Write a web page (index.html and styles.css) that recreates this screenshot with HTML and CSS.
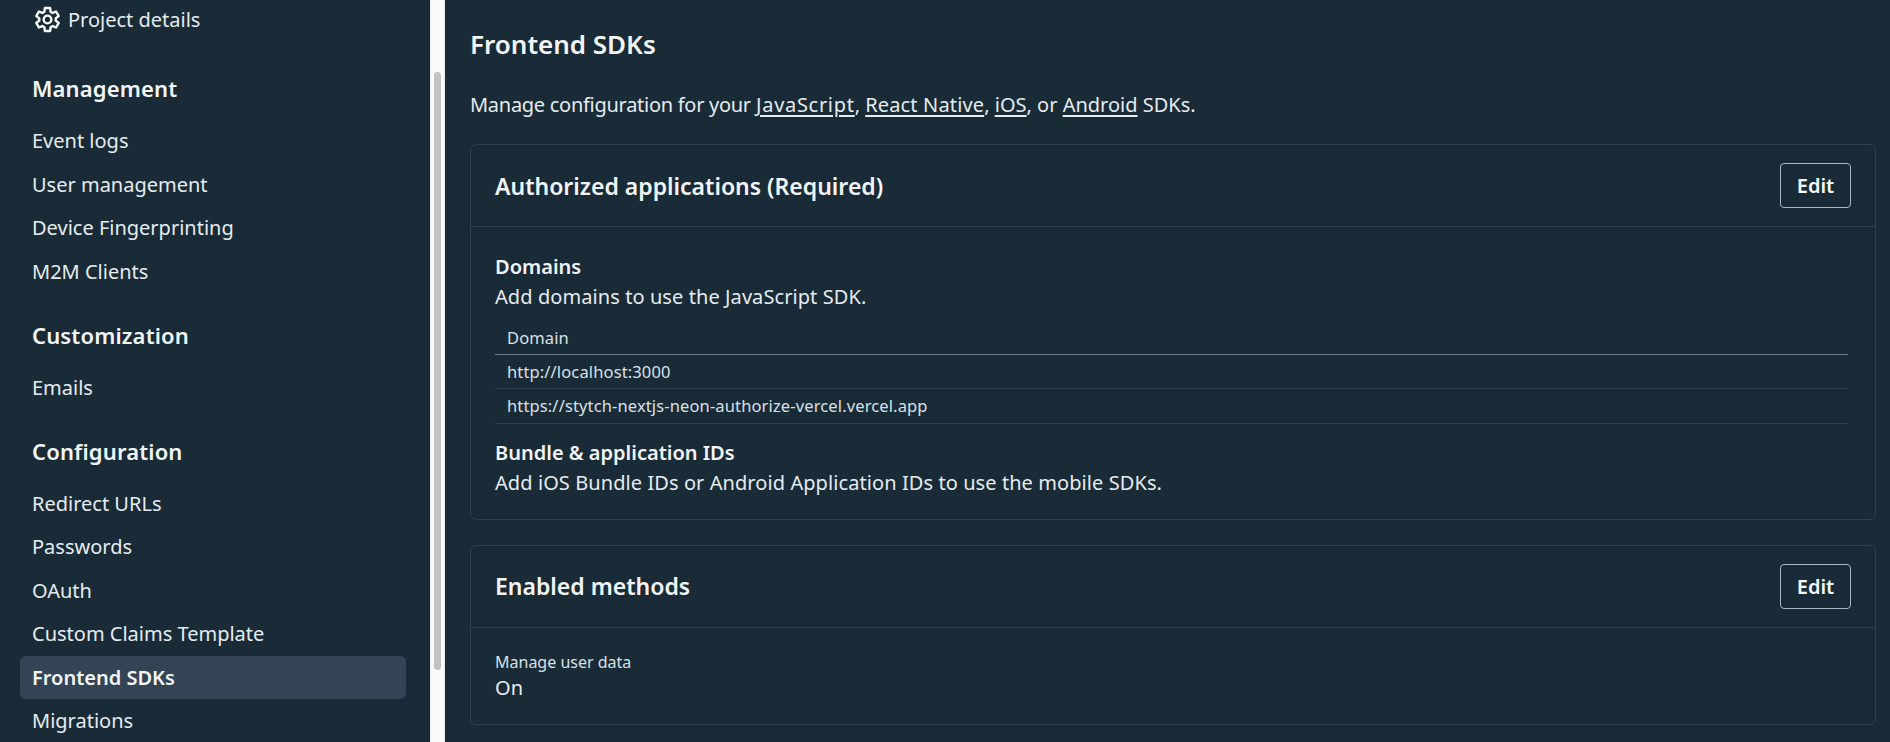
FILE: index.html
```html
<!DOCTYPE html>
<html lang="en">
<head>
<meta charset="utf-8">
<title>Frontend SDKs</title>
<link rel="stylesheet" href="styles.css">
</head>
<body>
<div class="app">
  <nav class="sidebar">
    <a class="item project">
      <svg class="gear" viewBox="-1 -1 26 26" width="27" height="27" fill="none" stroke="currentColor" stroke-width="2.3" stroke-linejoin="round"><path d="M9 4.58 9.46.99h5.08L15 4.58l1.93 1.12 3.33-1.41 2.54 4.41-2.88 2.19v2.22l2.88 2.19-2.54 4.41-3.33-1.41L15 19.42l-.46 3.59H9.46L9 19.42 7.07 18.3l-3.33 1.41-2.54-4.41 2.88-2.19v-2.22L1.2 8.7l2.54-4.41 3.33 1.41z"/><circle cx="12" cy="12" r="3.7"/></svg>
      <span>Project details</span>
    </a>
    <h2 class="group first">Management</h2>
    <a class="item">Event logs</a>
    <a class="item">User management</a>
    <a class="item">Device Fingerprinting</a>
    <a class="item">M2M Clients</a>
    <h2 class="group">Customization</h2>
    <a class="item">Emails</a>
    <h2 class="group">Configuration</h2>
    <a class="item">Redirect URLs</a>
    <a class="item">Passwords</a>
    <a class="item">OAuth</a>
    <a class="item">Custom Claims Template</a>
    <a class="item active">Frontend SDKs</a>
    <a class="item">Migrations</a>
  </nav>
  <div class="scrollbar"><div class="thumb"></div></div>
  <main class="main">
    <h1 class="title">Frontend SDKs</h1>
    <p class="intro"><span class="lead">Manage configuration for your</span> <a class="js">JavaScript</a>, <a class="rn">React Native</a>, <a>iOS</a>, or <a>Android</a> SDKs.</p>
    <section class="card">
      <header class="card-head">
        <h3>Authorized applications (Required)</h3>
        <button class="edit">Edit</button>
      </header>
      <div class="card-body">
        <h4 class="sub">Domains</h4>
        <p class="desc">Add domains to use the JavaScript SDK.</p>
        <table class="table">
          <thead><tr><th>Domain</th></tr></thead>
          <tbody>
            <tr><td>http://localhost:3000</td></tr>
            <tr><td>https://stytch-nextjs-neon-authorize-vercel.vercel.app</td></tr>
          </tbody>
        </table>
        <h4 class="sub">Bundle &amp; application IDs</h4>
        <p class="desc">Add iOS Bundle IDs or Android Application IDs to use the mobile SDKs.</p>
      </div>
    </section>
    <section class="card">
      <header class="card-head">
        <h3>Enabled methods</h3>
        <button class="edit">Edit</button>
      </header>
      <div class="card-body compact">
        <div class="label">Manage user data</div>
        <p class="desc">On</p>
      </div>
    </section>
  </main>
</div>
</body>
</html>
```

FILE: styles.css
```css
* { box-sizing: border-box; }
html, body { margin: 0; height: 100%; overflow: hidden; }
body {
  background: #1a2b38;
  color: #eef2f5;
  font-family: "Noto Sans", "Open Sans", sans-serif;
}
.app { display: flex; height: 742px; overflow: hidden; }

.sidebar {
  width: 430px;
  flex: none;
  padding: 0 24px 0 20px;
  display: flex;
  flex-direction: column;
  overflow: hidden;
}
.item {
  display: flex;
  align-items: center;
  height: 43.5px;
  flex: none;
  padding-left: 12px;
  font-size: 20px;
  color: #e6ebef;
  border-radius: 6px;
}
.item.project { height: 38px; gap: 7px; padding-left: 14px; }
.gear { flex: none; color: #fff; }
.item.active { background: #334554; font-weight: 600; color: #f4f6f8; }
.group {
  margin: 0;
  padding: 27px 0 0 12px;
  height: 72.5px;
  flex: none;
  font-size: 22px;
  line-height: 30px;
  font-weight: 600;
  letter-spacing: .15px;
  color: #f2f5f7;
}
.group.first { padding-top: 35px; height: 81px; }

.scrollbar {
  width: 15px;
  flex: none;
  background: #fafafa;
  border-left: 1px solid #f0f0f0;
  border-right: 1px solid #e8e8e8;
  padding: 72px 3px 0;
}
.thumb { height: 598px; background: #c1c1c1; border-radius: 4px; }

.main { flex: 1; padding: 24px 14px 0 25px; min-width: 0; }
.title { margin: 0; font-size: 26px; line-height: 40px; font-weight: 600; color: #f2f5f7; }
.intro { margin: 26px 0 0; font-size: 20px; line-height: 30px; color: #e6ebef; }
.intro a { text-decoration: underline; text-underline-offset: 3px; }
.lead { letter-spacing: -.28px; }
.intro .js { letter-spacing: .7px; }
.intro .rn { letter-spacing: .15px; }

.card {
  margin-top: 25px;
  border: 1px solid #2e3f4d;
  border-radius: 6px;
}
.intro + .card { margin-top: 24px; }
.card-head {
  display: flex;
  align-items: center;
  justify-content: space-between;
  height: 82px;
  padding: 0 24px;
  border-bottom: 1px solid #2e3f4d;
}
.card-head h3 { margin: 0; font-size: 23px; font-weight: 600; color: #f2f5f7; }
.edit {
  width: 71px;
  height: 45px;
  background: transparent;
  border: 1px solid #a9b8c4;
  border-radius: 4px;
  color: #f6f8fa;
  font: 600 20px "Noto Sans", sans-serif;
  padding: 0;
}
.card-body { padding: 25px 24px 21px; }
.card-body.compact { padding: 24px 24px 21px; }
.sub { margin: 0; font-size: 20px; line-height: 30px; font-weight: 600; color: #f2f5f7; }
.desc { margin: 0; font-size: 20px; line-height: 30px; letter-spacing: .08px; color: #e6ebef; }
.table { width: calc(100% - 3px); border-collapse: collapse; margin: 9px 0 14px; font-size: 16.5px; letter-spacing: .13px; }
.table th {
  text-align: left;
  font-weight: 400;
  height: 33px;
  padding: 0 12px;
  border-bottom: 1px solid #6c7d8a;
  color: #d9e0e5;
}
.table td {
  height: 34.5px;
  padding: 0 12px;
  border-bottom: 1px solid #2e3f4d;
  color: #d9e0e5;
}
.label { font-size: 16px; line-height: 21px; color: #d9e0e5; }
```
